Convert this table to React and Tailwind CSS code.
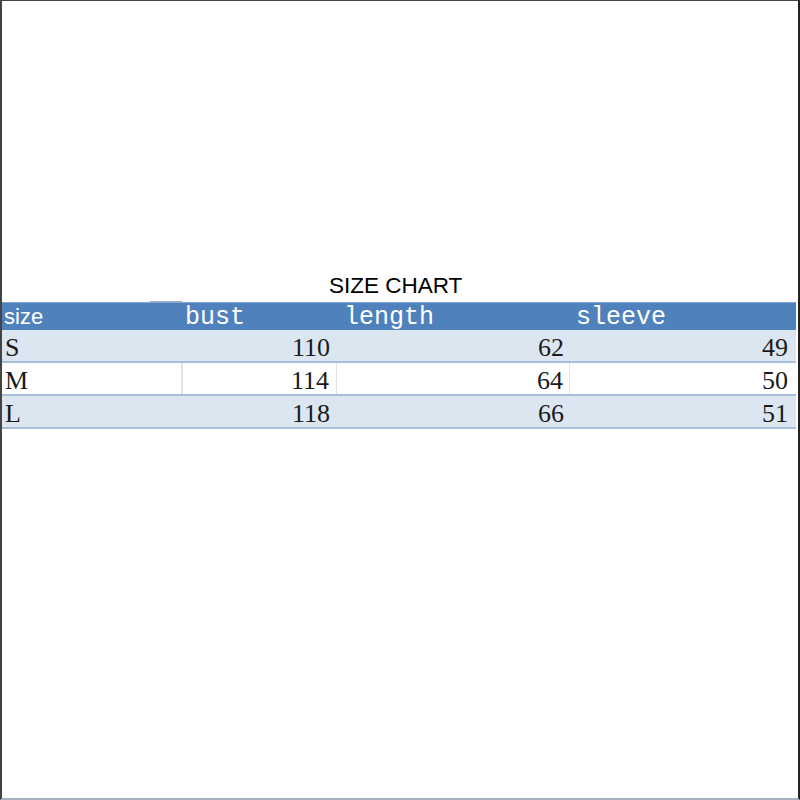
export default function App() {
  const rows = [
    { s: "S", b: "110", l: "62", v: "49", alt: true },
    { s: "M", b: "114", l: "64", v: "50", alt: false },
    { s: "L", b: "118", l: "66", v: "51", alt: true },
  ];
  const serif = { fontFamily: '"Liberation Serif", "Times New Roman", serif' };
  const mono = { fontFamily: '"Liberation Mono", "Courier New", monospace' };
  return (
    <div className="w-[800px] h-[800px] bg-white relative border-t border-t-[#444] border-l-2 border-l-[#444] border-r-2 border-r-[#222] border-b-2 border-b-[#a9b0bd] overflow-hidden">
      <div className="pt-[272px] flex flex-col">
        <div
          className="h-[26px] leading-[26px] text-[22.5px] text-black pl-[327px]"
          style={{ fontFamily: '"Liberation Sans", Arial, sans-serif' }}
        >
          SIZE CHART
        </div>
        <div className="mt-[3px] w-[794px] flex flex-col">
          <div className="h-[28px] bg-[#4f81bd] border-t border-t-[#7fa2cf] flex items-center text-white relative">
            <div className="absolute left-[148px] top-[-2px] w-[32px] h-[2px] bg-[#8eaad0]" />
            <div
              className="w-[179px] pl-[2px] text-[22px] leading-none"
              style={{ fontFamily: '"Liberation Sans", Arial, sans-serif' }}
            >
              size
            </div>
            <div className="w-[156px] pl-[4px] pt-[2px] text-[25px] leading-none" style={mono}>
              bust
            </div>
            <div className="w-[233px] pl-[7px] pt-[2px] text-[25px] leading-none" style={mono}>
              length
            </div>
            <div className="flex-1 pl-[6px] pt-[2px] text-[25px] leading-none" style={mono}>
              sleeve
            </div>
          </div>
          {rows.map((r) => (
            <div
              key={r.s}
              className={
                "h-[33px] flex items-stretch border-b-2 border-b-[#a7bfdc] text-[26px] text-[#1a1a1a] " +
                (r.alt ? "bg-[#dce6f1]" : "bg-white")
              }
              style={serif}
            >
              <div className="w-[179px] pl-[3px] flex items-center pt-[5px] leading-none">{r.s}</div>
              <div
                className={
                  "w-[156px] flex items-center justify-end pr-[7px] pt-[5px] leading-none " +
                  (r.alt ? "" : "border-l-2 border-l-[#e2e2e2] border-r border-r-[#e2e2e2]")
                }
              >
                {r.b}
              </div>
              <div
                className={
                  "w-[233px] flex items-center justify-end pr-[6px] pt-[5px] leading-none " +
                  (r.alt ? "" : "border-r border-r-[#e2e2e2]")
                }
              >
                {r.l}
              </div>
              <div className="flex-1 flex items-center justify-end pr-[8px] pt-[5px] leading-none">{r.v}</div>
            </div>
          ))}
        </div>
      </div>
    </div>
  );
}
